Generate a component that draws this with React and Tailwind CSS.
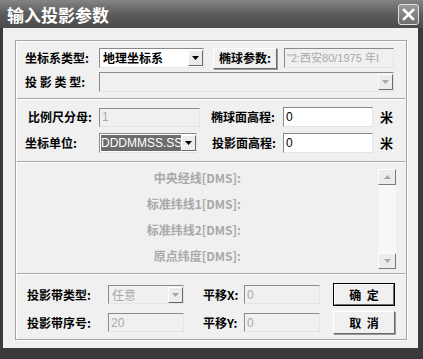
import React from "react";

const cjk = { fontFamily: '"Noto Sans CJK SC", "Liberation Sans", sans-serif' };
const lat = { fontFamily: '"Liberation Sans", "Noto Sans CJK SC", sans-serif' };

function Arrow({ disabled }) {
  return (
    <div className="w-[15px] h-[16px] flex items-center justify-center bg-[#ececec] border border-t-white border-l-white border-b-[#6a6a6a] border-r-[#6a6a6a] shrink-0">
      <svg width="7" height="4" viewBox="0 0 7 4">
        <polygon points="0,0 7,0 3.5,4" fill={disabled ? "#a8a8a8" : "#000"} />
      </svg>
    </div>
  );
}

function Field({ w, h = 20, disabled, children, className = "" }) {
  return (
    <div
      className={`flex items-center border border-t-[#8a8a8a] border-l-[#8a8a8a] border-b-[#e4e4e4] border-r-[#e4e4e4] shrink-0 overflow-hidden ${disabled ? "bg-[#f0f0f0]" : "bg-white"} ${className}`}
      style={{ width: w, height: h }}
    >
      {children}
    </div>
  );
}

function Label({ w, children, className = "" }) {
  return (
    <div className={`text-[12px] font-bold text-black whitespace-nowrap shrink-0 ${className}`} style={{ ...cjk, width: w }}>
      {children}
    </div>
  );
}

export default function App() {
  return (
    <div className="w-[423px] h-[359px] bg-[#3a3a3a] flex flex-col overflow-hidden">
      {/* Title bar */}
      <div className="h-[28px] bg-gradient-to-b from-[#858585] via-[#5c5c5c] to-[#4a4a4a] flex items-center justify-between pl-[7px] pr-[4px] shrink-0">
        <span className="text-white text-[17px] font-bold leading-none" style={cjk}>输入投影参数</span>
        <div className="w-[21px] h-[21px] rounded-[3px] border border-[#e0e0e0] bg-gradient-to-b from-[#9a9a9a] to-[#6e6e6e] flex items-center justify-center">
          <svg width="13" height="13" viewBox="0 0 13 13">
            <path d="M2 2 L11 11 M11 2 L2 11" stroke="#fff" strokeWidth="2.6" strokeLinecap="square" />
          </svg>
        </div>
      </div>

      {/* Body */}
      <div className="flex-1 bg-[#f0f0f0] ml-[3px] mr-[5px] mb-[11px] pt-[12px] pl-[12px] pr-[11px] pb-[8px] flex">
        <div className="flex-1 flex flex-col border border-[#a4a4a4] shadow-[inset_1px_1px_0_#ffffff,1px_1px_0_#ffffff]">
          {/* Section 1 */}
          <div className="pt-[7px] pb-[6px] flex flex-col gap-[4px] pl-[9px]">
            <div className="flex items-center h-[20px]">
              <Label w={74}>坐标系类型:</Label>
              <Field w={105}>
                <span className="flex-1 pl-[3px] text-[12px] font-bold text-black whitespace-nowrap" style={cjk}>地理坐标系</span>
                <Arrow />
              </Field>
              <button className="ml-[9px] w-[64px] h-[21px] bg-[#f0f0f0] border border-t-white border-l-white border-b-[#6a6a6a] border-r-[#6a6a6a] shadow-[1px_1px_0_#9a9a9a] text-[12px] font-bold text-black flex items-center justify-center shrink-0" style={cjk}>
                椭球参数:
              </button>
              <Field w={110} disabled className="ml-[7px] h-[18px]">
                <span className="pl-[2px] text-[11px] text-[#a8a8a8] whitespace-nowrap" style={lat}>"2:西安80/1975 年I</span>
              </Field>
            </div>
            <div className="flex items-center h-[20px]">
              <Label w={74}>投&nbsp;影&nbsp;类&nbsp;型:</Label>
              <Field w={295} disabled>
                <span className="flex-1" />
                <Arrow disabled />
              </Field>
            </div>
          </div>
          <div className="h-[2px] border-t border-[#a8a8a8] border-b border-b-white mx-[1px]" />

          {/* Section 2 */}
          <div className="pt-[7px] pb-[8px] flex flex-col gap-[6px] pl-[9px]">
            <div className="flex items-center h-[20px]">
              <Label w={74} className="pl-[3px]">比例尺分母:</Label>
              <Field w={101} h={19} disabled>
                <span className="pl-[2px] text-[12px] text-[#a8a8a8]" style={lat}>1</span>
              </Field>
              <Label w={72} className="ml-[11px]">椭球面高程:</Label>
              <Field w={90} h={20}>
                <span className="pl-[2px] text-[12px] text-black" style={lat}>0</span>
              </Field>
              <Label w={20} className="ml-[7px] text-[13px]">米</Label>
            </div>
            <div className="flex items-center h-[20px]">
              <Label w={74}>坐标单位:</Label>
              <Field w={98}>
                <span className="ml-[1px] flex-1 overflow-hidden bg-[#6c6c6c] text-white text-[12px] leading-[16px] h-[16px] whitespace-nowrap" style={lat}>DDDMMSS.SS</span>
                <Arrow />
              </Field>
              <Label w={71} className="ml-[15px]">投影面高程:</Label>
              <Field w={90} h={20}>
                <span className="pl-[2px] text-[12px] text-black" style={lat}>0</span>
              </Field>
              <Label w={20} className="ml-[7px] text-[13px]">米</Label>
            </div>
          </div>
          <div className="h-[2px] border-t border-[#a8a8a8] border-b border-b-white mx-[1px]" />

          {/* Section 3: scroll area */}
          <div className="h-[110px] flex pt-[6px] pb-[4px] pr-[10px]">
            <div className="flex-1 flex flex-col items-end pr-[137px] gap-[8px]">
              {["中央经线[DMS]:", "标准纬线1[DMS]:", "标准纬线2[DMS]:", "原点纬度[DMS]:"].map((t) => (
                <div key={t} className="h-[18px] text-[12px] font-semibold text-[#a8a8a8] whitespace-nowrap leading-[18px]" style={cjk}>{t}</div>
              ))}
            </div>
            <div className="w-[18px] flex flex-col justify-between bg-[#f7f7f7]">
              <div className="h-[16px] w-[18px] bg-[#ececec] border border-t-white border-l-white border-b-[#7a7a7a] border-r-[#7a7a7a] flex items-center justify-center">
                <svg width="7" height="4" viewBox="0 0 7 4"><polygon points="0,4 7,4 3.5,0" fill="#a8a8a8" /></svg>
              </div>
              <div className="h-[16px] w-[18px] bg-[#ececec] border border-t-white border-l-white border-b-[#7a7a7a] border-r-[#7a7a7a] flex items-center justify-center">
                <svg width="7" height="4" viewBox="0 0 7 4"><polygon points="0,0 7,0 3.5,4" fill="#a8a8a8" /></svg>
              </div>
            </div>
          </div>
          <div className="h-[2px] border-t border-[#a8a8a8] border-b border-b-white mx-[1px]" />

          {/* Section 4 */}
          <div className="pt-[8px] flex flex-col gap-[5px] pl-[11px]">
            <div className="flex items-center h-[23px]">
              <Label w={81}>投影带类型:</Label>
              <Field w={76} h={19} disabled>
                <span className="flex-1 pl-[3px] text-[12px] text-[#a8a8a8]" style={cjk}>任意</span>
                <Arrow disabled />
              </Field>
              <Label w={41} className="ml-[19px]">平移X:</Label>
              <Field w={76} h={19} disabled>
                <span className="pl-[2px] text-[12px] text-[#a8a8a8]" style={lat}>0</span>
              </Field>
              <button className="ml-[13px] w-[62px] h-[23px] bg-[#f0f0f0] border border-black flex shrink-0">
                <div className="flex-1 border border-t-white border-l-white border-b-[#6a6a6a] border-r-[#6a6a6a] flex items-center justify-center text-[12px] font-bold text-black" style={cjk}>
                  确&nbsp;&nbsp;定
                </div>
              </button>
            </div>
            <div className="flex items-center h-[23px]">
              <Label w={81}>投影带序号:</Label>
              <Field w={76} h={19} disabled>
                <span className="pl-[2px] text-[12px] text-[#a8a8a8]" style={lat}>20</span>
              </Field>
              <Label w={41} className="ml-[19px]">平移Y:</Label>
              <Field w={76} h={19} disabled>
                <span className="pl-[2px] text-[12px] text-[#a8a8a8]" style={lat}>0</span>
              </Field>
              <button className="ml-[13px] w-[62px] h-[23px] bg-[#f0f0f0] border border-t-white border-l-white border-b-[#6a6a6a] border-r-[#6a6a6a] shadow-[1px_1px_0_#9a9a9a] flex items-center justify-center text-[12px] font-bold text-black shrink-0" style={cjk}>
                取&nbsp;&nbsp;消
              </button>
            </div>
          </div>
        </div>
      </div>
    </div>
  );
}
